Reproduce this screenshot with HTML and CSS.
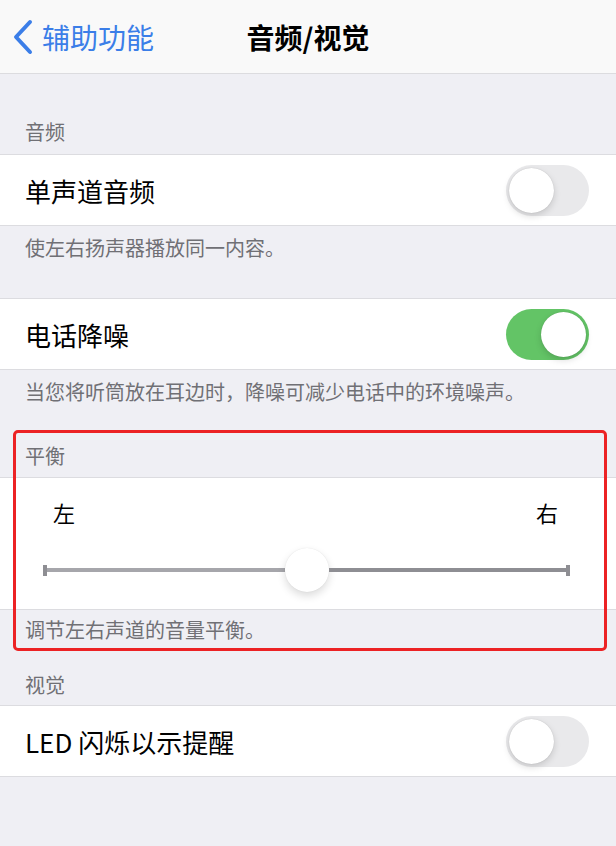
FILE: index.html
```html
<!DOCTYPE html>
<html lang="zh-CN">
<head>
    <meta charset="UTF-8">
    <meta name="viewport" content="width=device-width, initial-scale=1.0">
    <title>音频/视觉</title>
    <link rel="stylesheet" href="styles.css">
</head>
<body>
    <div class="nav">
        <a class="nav-back" href="#">
            <svg width="22" height="36" viewBox="0 0 22 36">
                <path d="M18 3 L4 18 L18 33" fill="none" stroke="#3b7ee8" stroke-width="4" stroke-linecap="round" stroke-linejoin="round"/>
            </svg>
            <span>辅助功能</span>
        </a>
        <div class="nav-title">音频/视觉</div>
        <div></div>
    </div>

    <div class="section-header first">音频</div>
    <div class="group">
        <div class="row">
            <span class="label">单声道音频</span>
            <span class="switch"></span>
        </div>
    </div>
    <div class="section-footer">使左右扬声器播放同一内容。</div>

    <div class="group">
        <div class="row">
            <span class="label">电话降噪</span>
            <span class="switch on"></span>
        </div>
    </div>
    <div class="section-footer before-mark">当您将听筒放在耳边时，降噪可减少电话中的环境噪声。</div>

    <!-- balance block, outlined in red -->
    <div class="marked">
        <div class="section-header balance-header">平衡</div>
        <div class="group">
            <div class="balance">
                <div class="balance-labels">
                    <span>左</span>
                    <span>右</span>
                </div>
                <div class="slider">
                    <span class="cap"></span>
                    <span class="fill left"></span>
                    <span class="thumb"></span>
                    <span class="fill right"></span>
                    <span class="cap"></span>
                </div>
            </div>
        </div>
        <div class="section-footer balance-footer">调节左右声道的音量平衡。</div>
    </div>

    <div class="section-header visual-header">视觉</div>
    <div class="group">
        <div class="row">
            <span class="label">LED 闪烁以示提醒</span>
            <span class="switch"></span>
        </div>
    </div>
</body>
</html>
```

FILE: styles.css
```css
body {
    margin: 0;
    padding: 0;
    background-color: #efeff4;
    font-family: "Noto Sans CJK SC", "Noto Sans", sans-serif;
    color: #000;
}

/* navigation bar */
.nav {
    display: grid;
    grid-template-columns: 1fr auto 1fr;
    align-items: center;
    height: 73px;
    background-color: #f9f9f9;
    border-bottom: 1px solid #dcdcdf;
}
.nav-back {
    display: flex;
    align-items: center;
    gap: 8px;
    padding-left: 12px;
    color: #3b7ee8;
    text-decoration: none;
    font-size: 28px;
}
.nav-back svg {
    display: block;
}
.nav-title {
    font-size: 28px;
    font-weight: bold;
}

/* section headers and footers */
.section-header,
.section-footer {
    padding: 0 25px;
    font-size: 20px;
    line-height: 26px;
    color: #707075;
}
.section-header {
    padding-bottom: 8px;
}
.section-header.first {
    padding-top: 45px;
    padding-bottom: 9px;
}
.section-footer {
    padding-top: 9px;
    padding-bottom: 37px;
}
.section-footer.before-mark {
    padding-bottom: 25px;
}
.balance-header {
    padding-top: 13px;
}
.balance-footer {
    padding-top: 7px;
    padding-bottom: 8px;
}
.visual-header {
    padding-top: 21px;
    padding-bottom: 7px;
}

/* grouped rows */
.group {
    background-color: #fff;
    border-top: 1px solid #dcdce0;
    border-bottom: 1px solid #dcdce0;
}
.row {
    display: flex;
    justify-content: space-between;
    align-items: center;
    height: 70px;
    padding: 0 27px 0 25px;
}
.label {
    font-size: 26px;
}

/* toggle switch */
.switch {
    position: relative;
    width: 83px;
    height: 51px;
    border-radius: 26px;
    background-color: #e9e9eb;
}
.switch::after {
    content: '';
    position: absolute;
    top: 3px;
    left: 3px;
    width: 45px;
    height: 45px;
    border-radius: 50%;
    background-color: #fff;
    box-shadow: 0 3px 7px rgba(0, 0, 0, 0.15), 0 0 1px rgba(0, 0, 0, 0.2);
}
.switch.on {
    background-color: #63c466;
}
.switch.on::after {
    left: 35px;
}

/* balance slider */
.balance {
    height: 131px;
    padding-top: 19px;
    box-sizing: border-box;
}
.balance-labels {
    display: flex;
    justify-content: space-between;
    padding: 0 58px 0 53px;
    font-size: 22px;
    line-height: 30px;
}
.slider {
    display: flex;
    align-items: center;
    height: 44px;
    margin: 21px 46px 0 43px;
}
.cap {
    width: 4px;
    height: 11px;
    background-color: #8e8e93;
}
.fill {
    flex: 1;
    height: 4px;
}
.fill.left {
    background-color: #a6a6ab;
}
.fill.right {
    background-color: #8e8e93;
}
.thumb {
    width: 44px;
    height: 44px;
    border-radius: 50%;
    background-color: #fff;
    box-shadow: 0 4px 9px rgba(0, 0, 0, 0.14), 0 0 1px rgba(0, 0, 0, 0.12);
}

/* red outline drawn over the balance block */
.marked {
    position: relative;
}
.marked::after {
    content: '';
    position: absolute;
    top: 0;
    bottom: 0;
    left: 13px;
    right: 9px;
    border: 3px solid #ec2224;
    border-radius: 5px;
    pointer-events: none;
}
```
